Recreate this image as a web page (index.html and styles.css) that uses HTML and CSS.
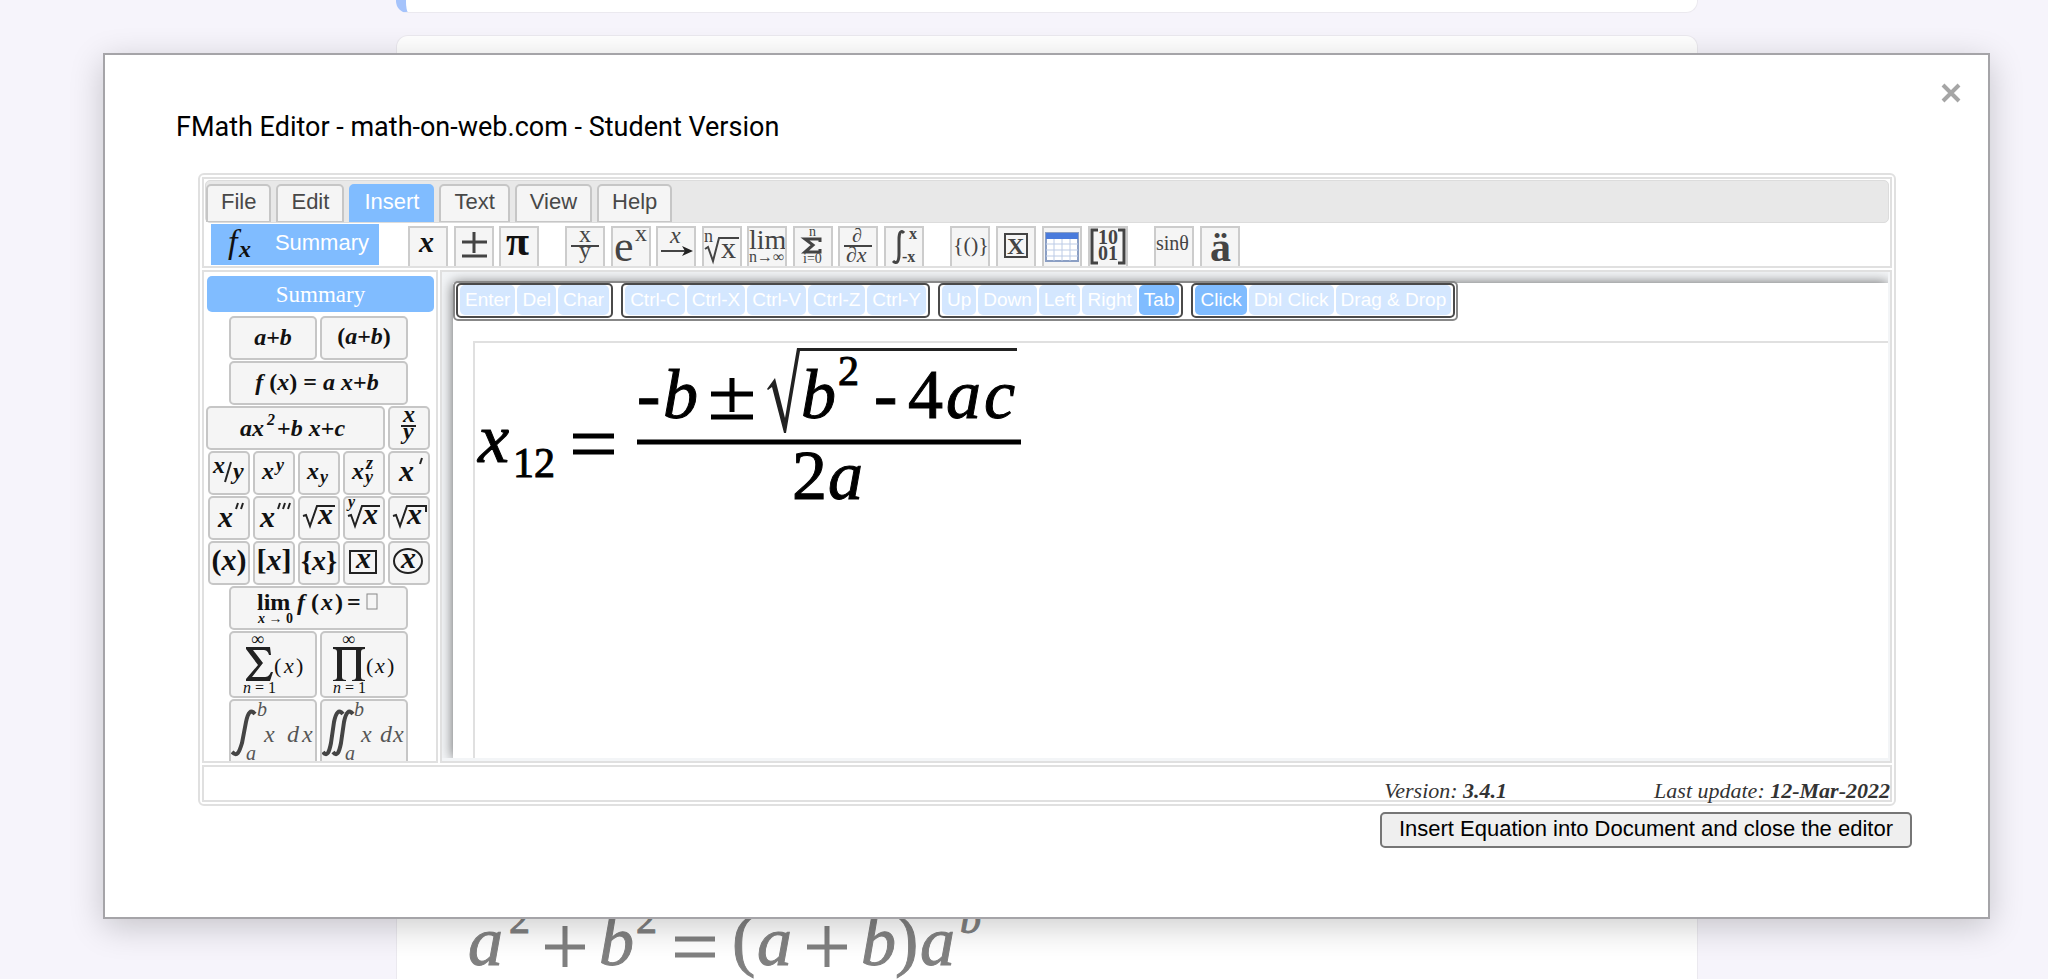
FILE: index.html
```
<!DOCTYPE html>
<html lang="en">
<head>
    <meta charset="utf-8">
    <title>FMath Editor</title>
    <link rel="stylesheet" href="styles.css">
</head>
<body>
    <div class="page">
        <div class="card card-active"></div>
        <div class="card card-question">
            <svg class="question-math" width="540" height="110" viewBox="460 869 540 110">
                <g class="math s70">
                    <text class="i" x="467" y="965">a</text>
                    <text class="s42" x="508" y="933">2</text>
                    <text class="i" x="598" y="965">b</text>
                    <text class="s42" x="635" y="933">2</text>
                    <text x="731" y="963">(</text>
                    <text class="i" x="756" y="965">a</text>
                    <text class="i" x="860" y="965">b</text>
                    <text x="894" y="963">)</text>
                    <text class="i" x="919" y="965">a</text>
                    <text class="i s42" x="959" y="933">b</text>
                </g>
                <path class="sign" d="M544 947H584M564 926V967M674 939H714M674 955H714M806 947H846M826 926V967"/>
            </svg>
        </div>
    </div>

    <div class="dialog" role="dialog" aria-labelledby="dialogTitle">
        <button class="close" aria-label="Close">
            <svg width="20" height="20" viewBox="0 0 20 20"><path d="M2 2L18 18M18 2L2 18"/></svg>
        </button>
        <h1 class="dialog-title" id="dialogTitle">FMath Editor - math-on-web.com - Student Version</h1>

        <div class="editor">
            <div class="cell header">
                <div class="tabs">
                    <button class="tab">File</button>
                    <button class="tab">Edit</button>
                    <button class="tab active">Insert</button>
                    <button class="tab">Text</button>
                    <button class="tab">View</button>
                    <button class="tab">Help</button>
                </div>
                <div class="toolbar">
                    <button class="summary-button">
                        <svg width="36" height="38" viewBox="0 0 36 38"><g class="math"><text class="i s34" x="7" y="27">f</text><text class="i b s24" x="18" y="31">x</text></g></svg>
                        <span>Summary</span>
                    </button>
                    <div class="tool-group group-3">
                        <button class="tool"><svg viewBox="0 0 36 38"><g class="math dark"><text class="i b s30" x="9" y="24">x</text></g></svg></button>
                        <button class="tool"><svg viewBox="0 0 36 38"><path class="thick" d="M6 14H31M18 4V25M6 28H31"/></svg></button>
                        <button class="tool"><svg viewBox="0 0 36 38"><g class="math dark"><text class="b s42" x="5" y="27">π</text></g></svg></button>
                    </div>
                    <div class="tool-group group-8">
                        <button class="tool"><svg viewBox="0 0 36 38"><g class="math"><text class="s24" x="12" y="14">x</text><text class="s24" x="12" y="30">y</text></g><path d="M4 18H32"/></svg></button>
                        <button class="tool"><svg viewBox="0 0 36 38"><g class="math"><text class="s44" x="1" y="33">e</text><text class="s24" x="22" y="13">x</text></g></svg></button>
                        <button class="tool"><svg viewBox="0 0 36 38"><g class="math"><text class="i s24" x="12" y="15">x</text></g><path d="M3 23H28"/><path class="solid" d="M24 18L35 23L24 28L27 23Z"/></svg></button>
                        <button class="tool"><svg viewBox="0 0 36 38"><g class="math"><text class="s18" x="0" y="14">n</text><text class="s30" x="17" y="30">x</text></g><path d="M1 21L4 19L9 33L15 10H35"/></svg></button>
                        <button class="tool"><svg viewBox="0 0 36 38"><g class="math"><text class="s28" x="0" y="21">lim</text><text class="s16" x="0" y="34">n→∞</text></g></svg></button>
                        <button class="tool"><svg viewBox="0 0 36 38"><g class="math"><text class="s14" x="14" y="8">n</text><text class="s14" x="8" y="35">i=0</text></g><path class="thick" d="M25 14V11H10L18 17L10 24H25V21"/></svg></button>
                        <button class="tool"><svg viewBox="0 0 36 38"><g class="math"><text class="i s20" x="12" y="14">∂</text><text class="i s22" x="6" y="34">∂x</text></g><path d="M4 18H32"/></svg></button>
                        <button class="tool"><svg viewBox="0 0 36 38"><path class="thick" d="M18 5C15 1 13 5 13 11V26C13 33 11 37 7 33"/><g class="math"><text class="b s16" x="23" y="11">x</text><text class="b s16" x="16" y="34">-x</text></g></svg></button>
                    </div>
                    <div class="tool-group group-4">
                        <button class="tool"><svg viewBox="0 0 36 38"><g class="math"><text class="s22" x="1" y="24">{()}</text></g></svg></button>
                        <button class="tool"><svg viewBox="0 0 36 38"><rect x="7" y="6" width="22" height="23"/><g class="math"><text class="b s24" x="9" y="26">X</text></g></svg></button>
                        <button class="tool">
                            <svg viewBox="0 0 36 38">
                                <rect class="sheet" x="2" y="5" width="32" height="28"/>
                                <path class="sheet-head" d="M2 5H34V11H2Z"/>
                                <path class="sheet-line" d="M2 16H34M2 22H34M2 28H34M10 11V33M18 11V33M26 11V33"/>
                            </svg>
                        </button>
                        <button class="tool"><svg viewBox="0 0 36 38"><path class="thick" d="M8 2H2V35H8M28 2H34V35H28"/><g class="math"><text class="b s20" x="8" y="16">10</text><text class="b s20" x="8" y="32">01</text></g></svg></button>
                    </div>
                    <div class="tool-group group-2">
                        <button class="tool"><svg viewBox="0 0 36 38"><g class="math"><text class="s20" x="0" y="22">sinθ</text></g></svg></button>
                        <button class="tool"><svg viewBox="0 0 36 38"><g class="math"><text class="b s42" x="8" y="33">ä</text></g></svg></button>
                    </div>
                </div>
            </div>

            <div class="main">
                <div class="cell sidebar">
                    <div class="sidebar-title">Summary</div>
                    <div class="keys">
                        <div class="key-row gap-3">
                            <button class="key"><svg width="84" height="40"><g class="math b s24"><text class="mid" x="42" y="27"><tspan class="i">a</tspan>+<tspan class="i">b</tspan></text></g></svg></button>
                            <button class="key"><svg width="84" height="40"><g class="math b s24"><text class="mid" x="42" y="26">(<tspan class="i">a</tspan>+<tspan class="i">b</tspan>)</text></g></svg></button>
                        </div>
                        <div class="key-row">
                            <button class="key"><svg width="175" height="40"><g class="math b s24"><text class="mid" x="86" y="27"><tspan class="i">f</tspan> (<tspan class="i">x</tspan>) = <tspan class="i">a x</tspan>+<tspan class="i">b</tspan></text></g></svg></button>
                        </div>
                        <div class="key-row gap-3 wide-row">
                            <button class="key"><svg width="175" height="40"><g class="math b s24"><text class="i" x="32" y="28">ax</text><text class="i s16" x="59" y="17">2</text><text x="69" y="28">+<tspan class="i">b x</tspan>+<tspan class="i">c</tspan></text></g></svg></button>
                            <button class="key"><svg width="38" height="40"><g class="math b i s24"><text x="13" y="14">x</text><text x="13" y="31">y</text></g><path d="M11 18H26"/></svg></button>
                        </div>
                        <div class="key-row gap-3">
                            <button class="key"><svg width="38" height="40"><g class="math b i s24"><text x="3" y="20">x</text><text x="23" y="26">y</text></g><path d="M15 29L21 9"/></svg></button>
                            <button class="key"><svg width="38" height="40"><g class="math b i s24"><text x="7" y="26">x</text><text class="s18" x="21" y="18">y</text></g></svg></button>
                            <button class="key"><svg width="38" height="40"><g class="math b i s24"><text x="7" y="26">x</text><text class="s18" x="20" y="30">y</text></g></svg></button>
                            <button class="key"><svg width="38" height="40"><g class="math b i s24"><text x="7" y="26">x</text><text class="s18" x="21" y="16">z</text><text class="s18" x="20" y="30">y</text></g></svg></button>
                            <button class="key"><svg width="38" height="40"><g class="math b i s30"><text x="9" y="28">x</text></g><path class="prime" d="M30 11L32 5"/></svg></button>
                        </div>
                        <div class="key-row gap-3">
                            <button class="key"><svg width="38" height="40"><g class="math b i s30"><text x="8" y="29">x</text></g><path class="prime" d="M26 11L28 5M31 11L33 5"/></svg></button>
                            <button class="key"><svg width="38" height="40"><g class="math b i s30"><text x="5" y="29">x</text></g><path class="prime" d="M23 11L25 5M28 11L30 5M33 11L35 5"/></svg></button>
                            <button class="key"><svg width="38" height="40"><g class="math b i s30"><text x="18" y="26">x</text></g><path d="M3 18L6 17L10 28L17 8H35"/></svg></button>
                            <button class="key"><svg width="38" height="40"><g class="math b i s30"><text x="18" y="26">x</text><text class="s16" x="3" y="9">y</text></g><path d="M3 18L6 17L10 28L17 8H35"/></svg></button>
                            <button class="key"><svg width="38" height="40"><g class="math b i s30"><text x="17" y="26">x</text></g><path d="M3 18L6 17L10 28L17 8H36V14"/></svg></button>
                        </div>
                        <div class="key-row gap-3">
                            <button class="key"><svg width="38" height="40"><g class="math b s30"><text class="mid" x="19" y="27">(<tspan class="i">x</tspan>)</text></g></svg></button>
                            <button class="key"><svg width="38" height="40"><g class="math b s30"><text class="mid" x="19" y="27">[<tspan class="i">x</tspan>]</text></g></svg></button>
                            <button class="key"><svg width="38" height="40"><g class="math b s28"><text class="mid" x="19" y="27">{<tspan class="i">x</tspan>}</text></g></svg></button>
                            <button class="key"><svg width="38" height="40"><g class="math b i s30"><text x="11" y="25">x</text></g><rect x="5" y="8" width="26" height="22"/></svg></button>
                            <button class="key"><svg width="38" height="40"><g class="math b i s30"><text x="11" y="25">x</text></g><ellipse cx="18" cy="18" rx="14" ry="12"/></svg></button>
                        </div>
                        <div class="key-row">
                            <button class="key"><svg width="175" height="40"><g class="math b s24"><text x="26" y="22">lim</text><text class="i" x="66" y="22">f</text><text x="80" y="22">(</text><text class="i" x="90" y="22">x</text><text x="104" y="22">)</text><text x="116" y="22">=</text><text class="s14" x="27" y="35"><tspan class="i">x</tspan> → 0</text></g><rect class="hollow" x="136" y="6" width="10" height="15"/></svg></button>
                        </div>
                        <div class="key-row gap-3">
                            <button class="key"><svg width="84" height="63"><path class="solid" d="M15 14H39L40 22H38C37 18 35 17 32 17H22L32 30L21 44H33C37 44 38 43 40 39H42L39 48H15V46L27 32L15 16Z"/><g class="math s22"><text class="s18" x="20" y="12">∞</text><text x="43" y="40">(</text><text class="i" x="53" y="40">x</text><text x="65" y="40">)</text><text class="s16" x="12" y="60"><tspan class="i">n</tspan> = 1</text></g></svg></button>
                            <button class="key"><svg width="84" height="63"><path class="solid" d="M11 14H43V16C40 16 39 17 39 19V44C39 46 40 47 43 47V48H30V47C33 47 34 46 34 44V17H20V44C20 46 21 47 24 47V48H11V47C14 47 15 46 15 44V19C15 17 14 16 11 16Z"/><g class="math s22"><text class="s18" x="20" y="12">∞</text><text x="44" y="40">(</text><text class="i" x="53" y="40">x</text><text x="65" y="40">)</text><text class="s16" x="11" y="60"><tspan class="i">n</tspan> = 1</text></g></svg></button>
                        </div>
                        <div class="key-row gap-3">
                            <button class="key grey"><svg width="84" height="63"><path class="integral" d="M1 51C6 56 8 52 11 42L15 21C17 11 20 8 24 13"/><g class="math i s24"><text class="s20" x="26" y="15">b</text><text class="s20" x="15" y="59">a</text><text x="33" y="41">x</text><text x="56" y="41">d</text><text x="71" y="41">x</text></g></svg></button>
                            <button class="key grey"><svg width="84" height="63"><path class="integral" d="M1 51C5 56 7 52 9 42L12 21C14 11 17 8 21 13M11 51C15 56 17 52 19 42L22 21C24 11 27 8 31 13"/><g class="math i s24"><text class="s20" x="32" y="15">b</text><text class="s20" x="23" y="59">a</text><text x="39" y="41">x</text><text x="58" y="41">d</text><text x="71" y="41">x</text></g></svg></button>
                        </div>
                    </div>
                </div>

                <div class="cell pane">
                    <div class="viewport">
                        <div class="workspace">
                            <div class="shortcuts">
                                <div class="shortcut-group">
                                    <button disabled>Enter</button>
                                    <button disabled>Del</button>
                                    <button disabled>Char</button>
                                </div>
                                <div class="shortcut-group">
                                    <button disabled>Ctrl-C</button>
                                    <button disabled>Ctrl-X</button>
                                    <button disabled>Ctrl-V</button>
                                    <button disabled>Ctrl-Z</button>
                                    <button disabled>Ctrl-Y</button>
                                </div>
                                <div class="shortcut-group">
                                    <button disabled>Up</button>
                                    <button disabled>Down</button>
                                    <button disabled>Left</button>
                                    <button disabled>Right</button>
                                    <button>Tab</button>
                                </div>
                                <div class="shortcut-group">
                                    <button>Click</button>
                                    <button disabled>Dbl Click</button>
                                    <button disabled>Drag &amp; Drop</button>
                                </div>
                            </div>
                            <div class="formula">
                                <svg width="560" height="170" viewBox="475 342 560 170">
                                    <g class="math s70">
                                        <text class="i" x="478" y="461">x</text>
                                        <text class="s42" x="513" y="476">12</text>
                                        <text x="637" y="417">-</text>
                                        <text class="i" x="663" y="417">b</text>
                                        <text class="i" x="801" y="417">b</text>
                                        <text class="s42" x="838" y="384">2</text>
                                        <text x="874" y="417">-</text>
                                        <text x="908" y="417">4</text>
                                        <text class="i" x="946" y="417">a</text>
                                        <text class="i" x="984" y="417">c</text>
                                        <text x="792" y="498">2</text>
                                        <text class="i" x="828" y="498">a</text>
                                    </g>
                                    <path class="sign" d="M573 435H614M573 451H614M711 393H753M732 377V411M711 416H753"/>
                                    <path class="sign" d="M637 441H1021"/>
                                    <path class="solid" d="M767 388L775 377L785 417L797 347H1017V350H800L786 432H784L772 386L768 389Z"/>
                                </svg>
                            </div>
                        </div>
                    </div>
                </div>
            </div>

            <div class="cell footer">
                <span>Version: <b>3.4.1</b></span>
                <span>Last update: <b>12-Mar-2022</b></span>
            </div>
        </div>

        <div class="actions">
            <button class="insert-button">Insert Equation into Document and close the editor</button>
        </div>
    </div>
</body>
</html>
```

FILE: styles.css
```
:root {
    --blue: #80bcff;
    --line: #e0e0e0;
    --key-line: #c6c6c6;
    --key-bg: #f5f5f5;
    --sans: "Liberation Sans", Arial, sans-serif;
    --serif: "Liberation Serif", "Times New Roman", serif;
}

* {
    box-sizing: border-box;
}

body {
    margin: 0;
    min-height: 100vh;
    background: #f6f4fb;
    font-family: var(--sans);
    overflow: hidden;
}

button {
    margin: 0;
    padding: 0;
    font-family: inherit;
    cursor: pointer;
}

svg {
    display: block;
    fill: none;
    stroke: #222;
    stroke-width: 2;
}

/* Page behind the dialog */
.page {
    height: 100vh;
    padding-left: 45px;
    display: flex;
    flex-direction: column;
    align-items: center;
    gap: 22px;
    overflow: hidden;
}

.card {
    width: 100%;
    max-width: 1302px;
    background: #fff;
    border: 1px solid #ebe9ef;
}

.card-active {
    flex: none;
    height: 13px;
    border-top: 0;
    border-left: 10px solid #a5c3fb;
    border-radius: 0 0 12px 12px;
}

.card-question {
    flex: 1;
    display: flex;
    align-items: flex-end;
    padding-left: 64px;
    border-bottom: 0;
    border-radius: 12px 12px 0 0;
}

/* Dialog */
.dialog {
    position: absolute;
    top: 53px;
    left: 103px;
    right: 58px;
    padding: 53px 71px 69px;
    background: #fff;
    border: 2px solid #a5a4a8;
    box-shadow: 0 8px 32px rgba(0, 0, 0, 0.2);
}

.close {
    position: absolute;
    top: 28px;
    right: 27px;
    border: 0;
    background: none;
}

.close svg {
    stroke: #a5a5a5;
    stroke-width: 4;
}

.dialog-title {
    margin: 0 0 27px;
    font: 400 27px/38px Roboto, sans-serif;
    color: #000;
}

.editor {
    margin: 0 21px 6px 22px;
    padding: 2px;
    display: flex;
    flex-direction: column;
    gap: 2px;
    border: 2px solid var(--line);
    border-radius: 6px;
}

.cell {
    border: 2px solid var(--line);
}

.header {
    height: 91px;
    padding: 1px 1px 0;
    overflow: hidden;
}

/* Menu tabs */
.tabs {
    display: flex;
    gap: 5px;
    padding-top: 3px;
    height: 43px;
    background: #e8e8e8;
    border: 1px solid #dcdcdc;
    border-radius: 5px;
}

.tab {
    height: 38px;
    padding: 0 13px 3px;
    font-size: 22px;
    line-height: 30px;
    color: #484848;
    background: var(--key-bg);
    border: 2px solid var(--key-line);
    border-bottom-width: 1px;
    border-radius: 5px 5px 0 0;
}

.tab.active {
    color: #fff;
    background: var(--blue);
    border-color: var(--blue);
}

/* Toolbar */
.toolbar {
    display: flex;
    align-items: flex-start;
    padding: 1px 0 0 6px;
}

.summary-button {
    display: flex;
    align-items: center;
    justify-content: space-between;
    width: 168px;
    height: 41px;
    padding: 0 10px;
    border: 0;
    background: var(--blue);
    color: #fff;
    font-size: 22px;
}

.summary-button span {
    padding-bottom: 3px;
}

.tool-group {
    display: flex;
    justify-content: space-between;
    margin: 2px 0 0 26px;
}

.group-3 {
    width: 131px;
    margin-left: 29px;
}

.group-8 {
    width: 359px;
}

.group-4 {
    width: 178px;
}

.group-2 {
    width: 86px;
}

.tool {
    width: 40px;
    height: 40px;
    border: 2px solid #ccc;
    border-bottom: 0;
    background: var(--key-bg);
}

.tool svg {
    width: 36px;
    height: 38px;
    stroke: #444;
}

/* Math glyphs */
.math {
    font-family: var(--serif);
    fill: #111;
    stroke: none;
}

.tool .math {
    fill: #444;
}

.tool .dark {
    fill: #111;
}

.i { font-style: italic; }
.b { font-weight: bold; }
.mid { text-anchor: middle; }
.s14 { font-size: 14px; }
.s16 { font-size: 16px; }
.s18 { font-size: 18px; }
.s20 { font-size: 20px; }
.s22 { font-size: 22px; }
.s24 { font-size: 24px; }
.s28 { font-size: 28px; }
.s30 { font-size: 30px; }
.s34 { font-size: 34px; }
.s42 { font-size: 42px; }
.s44 { font-size: 44px; }
.s70 { font-size: 70px; }

.thick {
    stroke-width: 3;
}

.solid {
    fill: #222;
    stroke: none;
}

.sheet {
    fill: #fff;
    stroke: #8b9fc4;
}

.sheet-head {
    fill: #4a7bdc;
    stroke: none;
}

.sheet-line {
    stroke: #bccbe6;
    stroke-width: 1;
}

.hollow {
    stroke: #888;
    stroke-width: 1;
}

.integral {
    stroke: #444;
    stroke-width: 4;
}

.grey .math {
    fill: #555;
}

/* Main row */
.main {
    display: flex;
    gap: 2px;
    height: 493px;
}

.sidebar {
    flex: none;
    width: 236px;
    padding: 4px 0 0 3px;
    overflow: hidden;
}

.sidebar-title {
    width: 227px;
    height: 36px;
    margin-bottom: 4px;
    font: 23px/38px var(--serif);
    text-align: center;
    color: #fff;
    background: var(--blue);
    border-radius: 5px;
}

.keys {
    display: flex;
    flex-direction: column;
    align-items: center;
    gap: 1px;
    width: 223px;
}

.key-row {
    display: flex;
    justify-content: center;
}

.wide-row {
    align-self: flex-start;
    margin-left: -1px;
}

.gap-3 {
    gap: 3px;
}

.key {
    flex: none;
    overflow: hidden;
    background: var(--key-bg);
    border: 2px solid var(--key-line);
    border-radius: 5px;
}

/* Equation area */
.pane {
    flex: 1;
    padding: 0 2px 3px 0;
    background: #f3f5f7;
}

.viewport {
    display: flex;
    height: 100%;
    padding: 11px 0 0 11px;
    overflow: hidden;
}

.workspace {
    flex: 1;
    display: flex;
    flex-direction: column;
    align-items: flex-start;
    background: #fff;
    box-shadow: 0 0 12px rgba(0, 0, 0, 0.6);
}

.shortcuts {
    display: flex;
    gap: 8px;
    margin-top: -2px;
    padding: 0 1px 1px;
    background: #fff;
    border: 2px solid #888;
    border-radius: 5px;
}

.shortcut-group {
    display: flex;
    gap: 2px;
    padding: 0 2px 1px;
    border: 2px solid #4a4a4a;
    border-radius: 5px;
}

.shortcut-group button {
    height: 30px;
    padding: 0 5px;
    font-size: 19px;
    line-height: 30px;
    color: #fff;
    background: var(--blue);
    border: 0;
    border-radius: 5px;
}

.shortcut-group button:disabled {
    background: #d4e7ff;
}

.formula {
    flex: 1;
    align-self: stretch;
    margin: 20px 0 0 20px;
    border-left: 2px solid var(--line);
    border-top: 2px solid var(--line);
}

.sign {
    stroke: #000;
    stroke-width: 5;
}

.formula .math {
    fill: #000;
    stroke: #000;
    stroke-width: 1;
}

.question-math .math {
    fill: #808080;
    stroke: #808080;
    stroke-width: 1;
}

.question-math .sign {
    stroke: #808080;
}

/* Footer */
.footer {
    display: flex;
    justify-content: flex-end;
    gap: 147px;
    height: 37px;
    padding-top: 9px;
    font: italic 22px/30px var(--serif);
    color: #333;
}

.actions {
    display: flex;
    justify-content: flex-end;
    margin-right: 5px;
}

.insert-button {
    height: 36px;
    padding: 0 17px 2px;
    font-size: 22px;
    color: #000;
    background: #efefef;
    border: 2px solid #767676;
    border-radius: 5px;
}
```
